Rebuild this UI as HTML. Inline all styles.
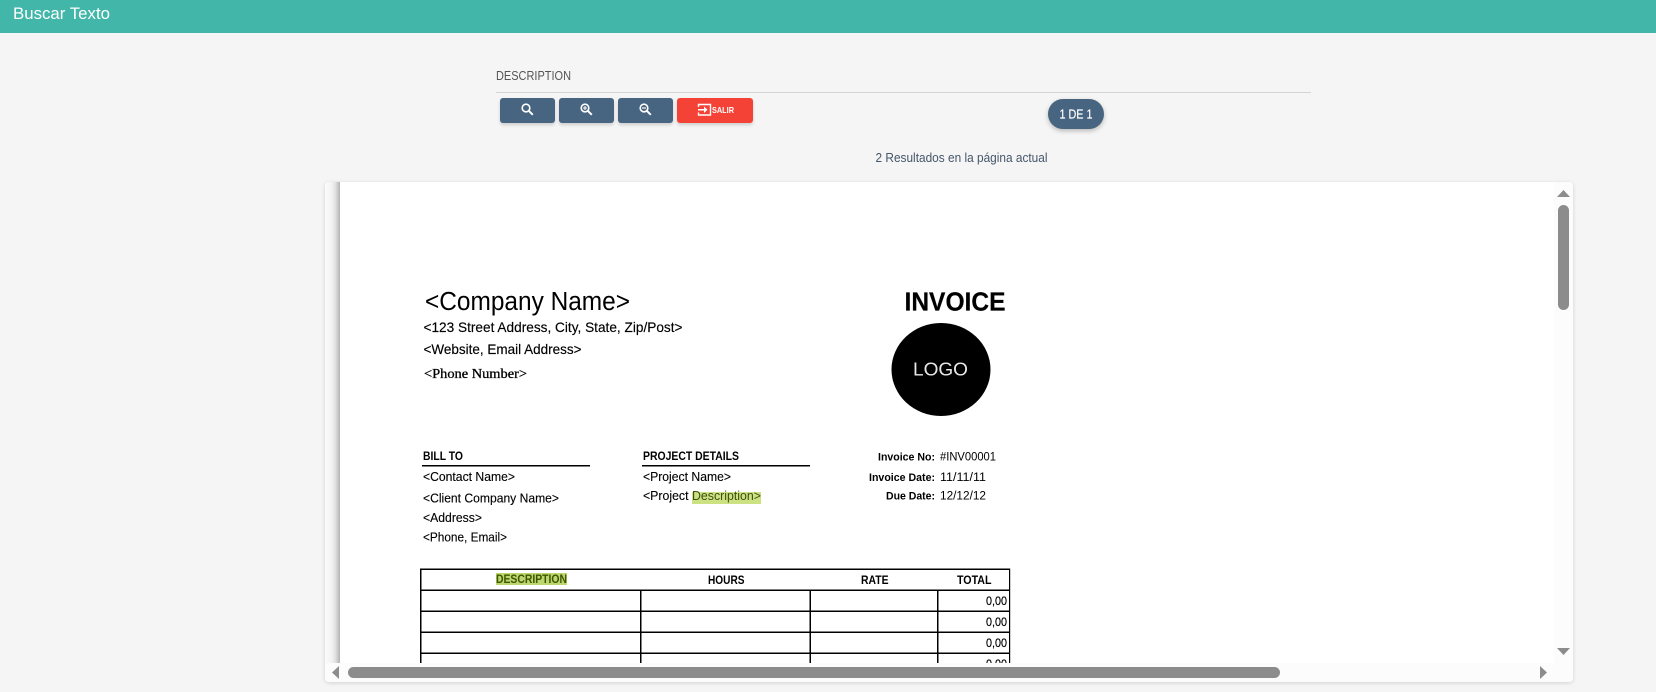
<!DOCTYPE html>
<html lang="es">
<head>
<meta charset="utf-8">
<title>Buscar Texto</title>
<style>
html,body{margin:0;padding:0;width:1656px;height:692px;overflow:hidden;background:#f5f5f5;font-family:"Liberation Sans",sans-serif}
.abs{position:absolute}
#top{left:0;top:0;width:1656px;height:33px;background:#41b6a9}
#rule{left:496px;top:92px;width:815px;height:1px;background:#d4d4d4}
.btn{top:98px;height:25px;border-radius:3px;background:#476480;box-shadow:0 2px 3px rgba(0,0,0,.16)}
#pill{left:1048px;top:99px;width:56px;height:30px;border-radius:15px;background:#476480;box-shadow:0 2px 5px rgba(0,0,0,.25)}
#panel{left:325px;top:182px;width:1248px;height:500px;background:#fff;border-radius:4px;box-shadow:0 1px 4px rgba(0,0,0,.14);overflow:hidden}
#gutter{left:0;top:0;width:15px;height:481px;background:linear-gradient(90deg,#fbfbfb 0,#f3f3f3 45%,#dedede 72%,#b2b2b2 100%)}
#vbar{left:1229px;top:0;width:19px;height:500px;background:#fcfcfc}
#hbar{left:0;top:481px;width:1248px;height:19px;background:#fcfcfc}
svg.full{position:absolute;left:0;top:0}
</style>
</head>
<body>
<div class="abs" id="top"></div>
<div class="abs" id="rule"></div>
<div class="abs btn" style="left:500px;width:55px"></div>
<div class="abs btn" style="left:559px;width:55px"></div>
<div class="abs btn" style="left:618px;width:55px"></div>
<div class="abs btn" style="left:677px;width:76px;background:#f44336"></div>
<div class="abs" id="pill"></div>
<div class="abs" id="panel">
  <div class="abs" id="gutter"></div>
  <div class="abs" id="vbar"></div>
  <div class="abs" id="hbar"></div>
</div>
<svg class="full" width="1656" height="692" viewBox="0 0 1656 692" font-family="'Liberation Sans',sans-serif">
  <defs><clipPath id="doc"><rect x="340" y="182" width="1214" height="481"/></clipPath></defs>

  <text x="13" y="19" font-size="17" fill="#fff" textLength="97" lengthAdjust="spacingAndGlyphs">Buscar Texto</text>
  <text x="496" y="80" font-size="12.500" fill="#555" textLength="75" lengthAdjust="spacingAndGlyphs">DESCRIPTION</text>

  <!-- toolbar icons -->
  <g fill="none" stroke="#fff" stroke-width="1.600">
    <circle cx="526" cy="108" r="3.800"/><path d="M528.800 110.800l4 4" stroke-width="2"/>
    <circle cx="585" cy="108" r="3.800"/><path d="M587.800 110.800l4 4" stroke-width="2"/>
    <path d="M583 108h4M585 106v4" stroke-width="1.100"/>
    <circle cx="644" cy="108" r="3.800"/><path d="M646.800 110.800l4 4" stroke-width="2"/>
    <path d="M642 108h4" stroke-width="1.200"/>
    <path d="M698.500 107v-2.500h12v10.500h-12v-2.500" stroke-width="1.400"/>
  </g>
  <path d="M698 109h6v-2.500l3.500 3.250-3.500 3.250v-2.500h-6z" fill="#fff"/>
  <text x="712" y="113" font-size="8.500" font-weight="700" fill="#fff" textLength="22" lengthAdjust="spacingAndGlyphs">SALIR</text>

  <text x="1059.500" y="118.500" font-size="13" fill="#fff" stroke="#fff" stroke-width=".2" textLength="33" lengthAdjust="spacingAndGlyphs">1 DE 1</text>
  <text x="875.500" y="162" font-size="12.500" fill="#46566a" textLength="172" lengthAdjust="spacingAndGlyphs">2 Resultados en la página actual</text>

  <g clip-path="url(#doc)" fill="#000">
    <text x="425" y="310" font-size="25.500" textLength="205" lengthAdjust="spacingAndGlyphs">&lt;Company Name&gt;</text>
    <g stroke="#000" stroke-width=".15">
    <text x="423.500" y="332" font-size="14" textLength="259" lengthAdjust="spacingAndGlyphs">&lt;123 Street Address, City, State, Zip/Post&gt;</text>
    <text x="423.500" y="354" font-size="14" textLength="158" lengthAdjust="spacingAndGlyphs">&lt;Website, Email Address&gt;</text>
    <text x="424" y="378" font-size="13.500" font-family="'Liberation Serif',serif" stroke-width=".3" textLength="103" lengthAdjust="spacingAndGlyphs">&lt;Phone Number&gt;</text>
    </g>

    <text x="904.500" y="310.500" font-size="25.500" font-weight="700" stroke="#000" stroke-width=".2" textLength="101" lengthAdjust="spacingAndGlyphs">INVOICE</text>
    <ellipse cx="941" cy="369.500" rx="49.500" ry="46.500"/>
    <text x="913" y="375.500" font-size="18.500" fill="#e8e8e8" textLength="55" lengthAdjust="spacingAndGlyphs">LOGO</text>

    <text x="423" y="460" font-size="11.500" font-weight="700" textLength="40" lengthAdjust="spacingAndGlyphs">BILL TO</text>
    <rect x="422" y="465" width="168" height="1.500"/>
    <text x="643" y="460" font-size="11.500" font-weight="700" textLength="96" lengthAdjust="spacingAndGlyphs">PROJECT DETAILS</text>
    <rect x="642" y="465" width="168" height="1.500"/>

    <g stroke="#000" stroke-width=".12">
    <text x="423" y="481" font-size="12.500" textLength="92" lengthAdjust="spacingAndGlyphs">&lt;Contact Name&gt;</text>
    <text x="423" y="502.500" font-size="12.500" textLength="136" lengthAdjust="spacingAndGlyphs">&lt;Client Company Name&gt;</text>
    <text x="423" y="522" font-size="12.500" textLength="59" lengthAdjust="spacingAndGlyphs">&lt;Address&gt;</text>
    <text x="423" y="541.500" font-size="12.500" textLength="84" lengthAdjust="spacingAndGlyphs">&lt;Phone, Email&gt;</text>
    <text x="643" y="481" font-size="12.500" textLength="88" lengthAdjust="spacingAndGlyphs">&lt;Project Name&gt;</text>
    <text x="643" y="500" font-size="12.500" textLength="45.500" lengthAdjust="spacingAndGlyphs">&lt;Project</text>
    </g>
    <rect x="692" y="492" width="69" height="12" fill="#cbe182"/>
    <text x="692" y="500" font-size="12.500" fill="#3f4f12" textLength="69" lengthAdjust="spacingAndGlyphs">Description&gt;</text>

    <text x="878" y="460.500" font-size="11" font-weight="700" textLength="57" lengthAdjust="spacingAndGlyphs">Invoice No:</text>
    <text x="940" y="460.500" font-size="11.500" textLength="56" lengthAdjust="spacingAndGlyphs">#INV00001</text>
    <text x="869" y="481" font-size="11" font-weight="700" textLength="66" lengthAdjust="spacingAndGlyphs">Invoice Date:</text>
    <text x="940" y="481" font-size="11.500" textLength="46" lengthAdjust="spacingAndGlyphs">11/11/11</text>
    <text x="886" y="499.500" font-size="11" font-weight="700" textLength="49" lengthAdjust="spacingAndGlyphs">Due Date:</text>
    <text x="940" y="499.500" font-size="11.500" textLength="46" lengthAdjust="spacingAndGlyphs">12/12/12</text>

    <!-- table -->
    <g>
      <rect x="420" y="568.500" width="590" height="1.500"/>
      <rect x="420" y="589.500" width="590" height="1.500"/>
      <rect x="420" y="610.500" width="590" height="1.500"/>
      <rect x="420" y="631.500" width="590" height="1.500"/>
      <rect x="420" y="652.500" width="590" height="1.500"/>
      <rect x="420" y="568.500" width="1.500" height="95"/>
      <rect x="1009" y="568.500" width="1.200" height="95"/>
      <rect x="640" y="590" width="1.500" height="74"/>
      <rect x="809.500" y="590" width="1.500" height="74"/>
      <rect x="937" y="590" width="1.500" height="74"/>
    </g>
    <rect x="496" y="573" width="71" height="12" fill="#bcd670"/>
    <text x="496" y="583" font-size="11.500" font-weight="700" fill="#3f5500" textLength="71" lengthAdjust="spacingAndGlyphs">DESCRIPTION</text>
    <text x="708" y="584" font-size="11.500" font-weight="700" textLength="36.500" lengthAdjust="spacingAndGlyphs">HOURS</text>
    <text x="861" y="584" font-size="11.500" font-weight="700" textLength="27.500" lengthAdjust="spacingAndGlyphs">RATE</text>
    <text x="957" y="584" font-size="11.500" font-weight="700" textLength="34.500" lengthAdjust="spacingAndGlyphs">TOTAL</text>
    <g stroke="#000" stroke-width=".15">
    <text x="986" y="605" font-size="12" textLength="21" lengthAdjust="spacingAndGlyphs">0,00</text>
    <text x="986" y="626" font-size="12" textLength="21" lengthAdjust="spacingAndGlyphs">0,00</text>
    <text x="986" y="647" font-size="12" textLength="21" lengthAdjust="spacingAndGlyphs">0,00</text>
    <text x="986" y="668" font-size="12" textLength="21" lengthAdjust="spacingAndGlyphs">0,00</text>
    </g>
  </g>

  <!-- scrollbars -->
  <g fill="#8c8c8c">
    <path d="M1563.500 190l6.500 7h-13z"/>
    <path d="M1563.500 655l6.500-7h-13z"/>
    <rect x="1558" y="205" width="11" height="105" rx="5.500"/>
    <path d="M332 672.500l7-6.500v13z"/>
    <path d="M1547 672.500l-7-6.500v13z"/>
    <rect x="348" y="667" width="932" height="11" rx="5.500"/>
  </g>
</svg>
</body>
</html>
